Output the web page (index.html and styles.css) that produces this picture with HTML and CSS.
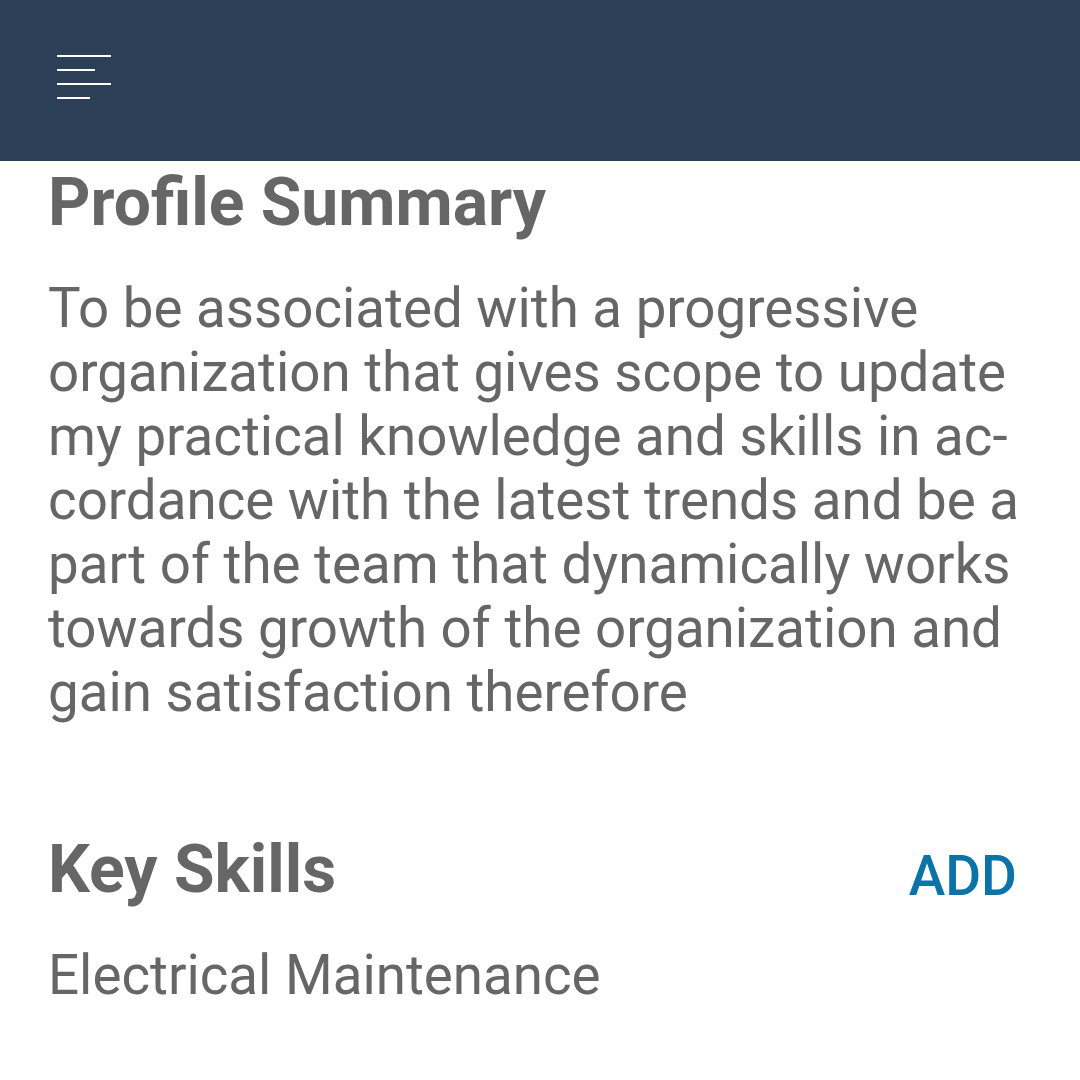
FILE: index.html
```html
<!DOCTYPE html>
<html lang="en">
<head>
<meta charset="utf-8">
<link rel="stylesheet" href="styles.css">
</head>
<body>
<header class="topbar">
  <button class="menu" aria-label="Menu">
    <span class="bar bar-long"></span>
    <span class="bar bar-mid"></span>
    <span class="bar bar-long"></span>
    <span class="bar bar-short"></span>
  </button>
</header>
<main class="content">
  <section class="summary">
    <h1 class="title">Profile Summary</h1>
    <p class="text">To be associated with a progressive organization that gives scope to update my practical knowledge and skills in ac&shy;cordance with the latest trends and be a part of the team that dynamically works towards growth of the organization and gain satisfaction therefore</p>
  </section>
  <section class="skills">
    <div class="skills-head">
      <h2 class="title">Key Skills</h2>
      <span class="add">ADD</span>
    </div>
    <p class="skill">Electrical Maintenance</p>
  </section>
</main>
</body>
</html>
```
FILE: styles.css
```css
* { box-sizing: border-box; }
html, body { margin: 0; padding: 0; background: #fff; }
body { font-family: Roboto, "Noto Sans", sans-serif; color: #666; width: 1080px; height: 1080px; overflow: hidden; }
.topbar { height: 161px; background: #2b3f57; display: flex; align-items: flex-start; padding: 55px 0 0 57px; }
.menu { background: none; border: 0; padding: 0; display: flex; flex-direction: column; gap: 12px; }
.bar { display: block; height: 2px; background: #fff; }
.bar-long { width: 54px; }
.bar-mid { width: 38px; }
.bar-short { width: 33px; }
.content { padding: 0 50px 0 48px; }
.title { margin: 0; font-weight: 700; font-size: 66px; line-height: 1; }
.summary .title { padding-top: 9px; }
.text { margin: 40px 0 0; font-size: 54.7px; line-height: 64px; width: 982px; hyphens: manual; }
.skills { margin-top: 113px; }
.skills-head { display: flex; justify-content: space-between; align-items: flex-start; padding-right: 13px; }
.add { color: #0b73a8; font-weight: 500; font-size: 55px; line-height: 1; padding-top: 12px; }
.skill { margin: 39px 0 0; font-size: 54.7px; line-height: 64px; }
```
